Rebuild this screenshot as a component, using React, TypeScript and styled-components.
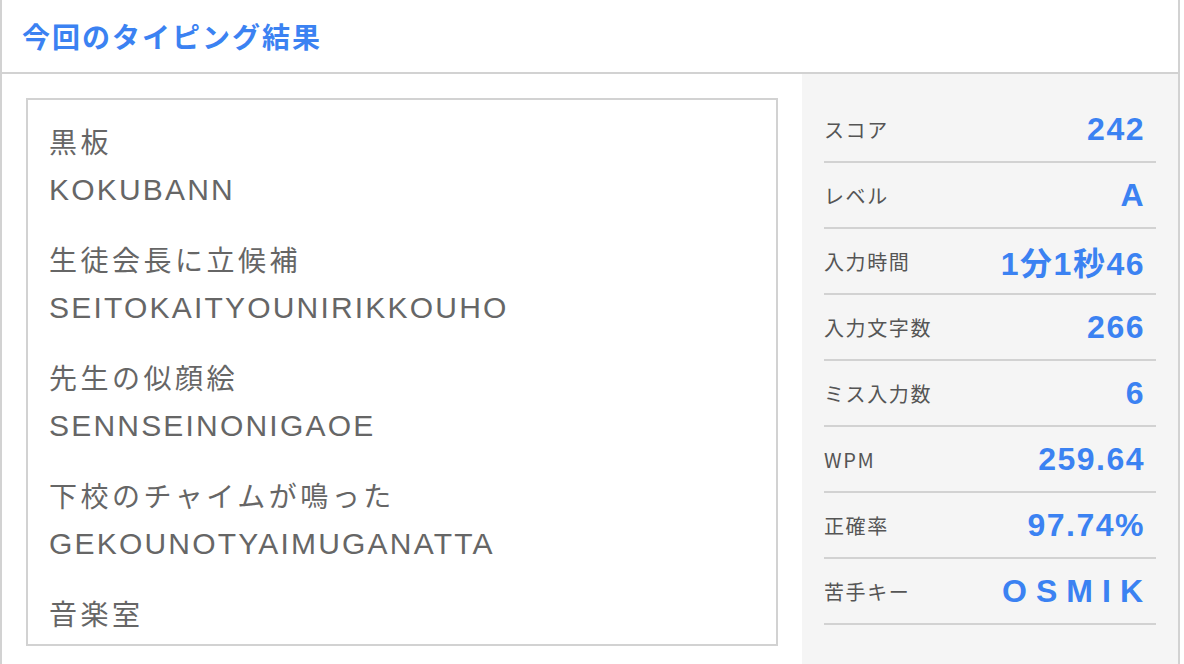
import React from 'react'
import styled, { createGlobalStyle } from 'styled-components'

const GlobalStyle = createGlobalStyle`
  html, body {
    margin: 0;
    padding: 0;
    background: #ffffff;
  }
  body {
    font-family: 'Liberation Sans', 'Noto Sans CJK JP', sans-serif;
  }
`

// the last word's romaji sits below the fold of the scroll box, so it is left out
const words = [
  { kanji: '黒板', roma: 'KOKUBANN' },
  { kanji: '生徒会長に立候補', roma: 'SEITOKAITYOUNIRIKKOUHO' },
  { kanji: '先生の似顔絵', roma: 'SENNSEINONIGAOE' },
  { kanji: '下校のチャイムが鳴った', roma: 'GEKOUNOTYAIMUGANATTA' },
  { kanji: '音楽室', roma: '' },
]

const stats = [
  { label: 'スコア', value: '242' },
  { label: 'レベル', value: 'A' },
  { label: '入力時間', value: '1分1秒46' },
  { label: '入力文字数', value: '266' },
  { label: 'ミス入力数', value: '6' },
  { label: 'WPM', value: '259.64' },
  { label: '正確率', value: '97.74%' },
  { label: '苦手キー', value: 'OSMIK', wide: true },
]

function App() {
  return (
    <>
      <GlobalStyle />
      <StyledResult>
        <div className={'result_header'}>
          <h2>今回のタイピング結果</h2>
        </div>
        <div className={'result_body'}>
          <div className={'result_words'}>
            <div className={'word_box'}>
              {words.map(({ kanji, roma }) => (
                <div key={kanji} className={'word_item'}>
                  <p className={'kanji'}>{kanji}</p>
                  {roma && <p className={'roma'}>{roma}</p>}
                </div>
              ))}
            </div>
          </div>
          <div className={'result_stats'}>
            {stats.map(({ label, value, wide }) => (
              <StatRow key={label}>
                <span className={'stat_label'}>{label}</span>
                <StatValue wide={!!wide}>{value}</StatValue>
              </StatRow>
            ))}
          </div>
        </div>
      </StyledResult>
    </>
  )
}

export default App

const StyledResult = styled.div`
  width: 1176px;
  height: 664px;
  border-left: 2px solid #d2d2d2;
  border-right: 2px solid #d2d2d2;
  display: flex;
  flex-direction: column;
  overflow: hidden;

  .result_header {
    height: 72px;
    border-bottom: 2px solid #d2d2d2;
    display: flex;
    align-items: center;
    padding-left: 20px;

    h2 {
      margin: 0;
      font-family: 'Noto Sans CJK JP', sans-serif;
      font-size: 28px;
      font-weight: 700;
      letter-spacing: 2px;
      color: #3b82f2;
    }
  }

  .result_body {
    display: flex;
    flex: 1;
    min-height: 0;
  }

  .result_words {
    width: 800px;
    padding: 24px 24px 0;
    box-sizing: border-box;
    background: #ffffff;

    .word_box {
      height: 548px;
      box-sizing: border-box;
      border: 2px solid #d2d2d2;
      padding: 21px;
      overflow: hidden;
    }

    .word_item {
      margin-bottom: 26px;

      p {
        margin: 0;
        line-height: 46px;
        color: #666666;
        white-space: nowrap;
      }

      .kanji {
        font-size: 28px;
        letter-spacing: 3.5px;
      }

      .roma {
        font-size: 30px;
        letter-spacing: 2.2px;
      }
    }
  }

  .result_stats {
    flex: 1;
    background: #f5f5f5;
    padding: 23px 22px 0;
  }
`

const StatRow = styled.div`
  display: flex;
  align-items: center;
  justify-content: space-between;
  height: 64px;
  border-bottom: 2px solid #d2d2d2;
  padding: 0 11px 0 0;

  .stat_label {
    font-family: 'Noto Sans CJK JP', sans-serif;
    font-size: 20px;
    letter-spacing: 1.6px;
    color: #555555;
  }
`

const StatValue = styled.span<{ wide: boolean }>`
  font-family: 'Liberation Sans', 'Noto Sans CJK JP', sans-serif;
  font-size: 32px;
  font-weight: 700;
  letter-spacing: ${({ wide }) => (wide ? '9px' : '1.5px')};
  margin-right: ${({ wide }) => (wide ? '-7px' : '0')};
  color: #3b82f2;
`
